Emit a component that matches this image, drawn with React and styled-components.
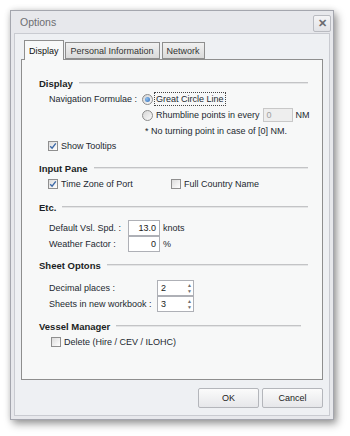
import React, { useState } from 'react';
import styled, { createGlobalStyle } from 'styled-components';

const GlobalStyle = createGlobalStyle`
  html, body {
    margin: 0;
    padding: 0;
    background: #ffffff;
  }
  body {
    font-family: 'Liberation Sans', Arial, sans-serif;
  }
`;

const Stage = styled.div`
  padding: 10px 0 0 10px;
  height: 436px;
  box-sizing: border-box;
`;

const Window = styled.div`
  width: 324px;
  height: 410px;
  box-sizing: border-box;
  display: flex;
  flex-direction: column;
  background: #e7e8ec;
  border: 1px solid #a4a6ae;
  box-shadow: 3px 4px 8px rgba(0, 0, 0, 0.38), 0 0 6px rgba(0, 0, 0, 0.12);
`;

const TitleBar = styled.div`
  height: 22px;
  display: flex;
  align-items: center;
  justify-content: space-between;
  padding: 0 2px 0 9px;
`;

const Title = styled.span`
  font-size: 10.5px;
  color: #6d6e72;
`;

const CloseButton = styled.button`
  width: 18px;
  height: 17px;
  margin-top: 3px;
  padding: 0;
  border: 1px solid #b9bbc1;
  border-radius: 2px;
  background: linear-gradient(#f4f4f6, #e2e3e7);
  color: #6a6b70;
  font: bold 11px 'Liberation Sans', Arial, sans-serif;
  line-height: 13px;
`;

const Client = styled.div`
  flex: 1;
  margin: 0 3px 3px;
  border: 1px solid #c9cbd1;
  background: #eef0f3;
  padding: 6px 6px 7px;
  display: flex;
  flex-direction: column;
`;

const TabBar = styled.div`
  height: 19px;
  display: flex;
  align-items: flex-end;
  padding-left: 3px;
  gap: 1px;
  position: relative;
  z-index: 1;
`;

const Tab = styled.div`
  height: ${p => (p.$active ? '20px' : '17px')};
  margin-bottom: ${p => (p.$active ? '-1px' : '0')};
  margin-left: ${p => p.$ml || 0}px;
  box-sizing: border-box;
  padding: 0 ${p => p.$pad}px;
  display: flex;
  align-items: center;
  font-size: 9px;
  color: ${p => (p.$active ? '#111' : '#333')};
  border: 1px solid #8e8e8e;
  border-bottom: ${p => (p.$active ? 'none' : '1px solid #8e8e8e')};
  background: ${p => (p.$active ? '#f8f9f9' : 'linear-gradient(#f1f1f1, #dadada)')};
`;

const Panel = styled.div`
  flex: 1;
  border: 1px solid #8e8e8e;
  background: #f7f8f8;
  padding: 15px 14px 0 17px;
  color: #232830;
  font-size: 9px;
`;

const Header = styled.div`
  height: 16px;
  margin-top: ${p => p.$mt || 0}px;
  margin-right: ${p => p.$mr || 0}px;
  display: flex;
  align-items: center;
  gap: 6px;
  font-size: 9.5px;
  font-weight: bold;
  color: #1c1f24;
`;

const Rule = styled.div`
  flex: 1;
  height: 1px;
  background: #c3c4c6;
  border-bottom: 1px solid #e4e5e6;
`;

const Row = styled.div`
  height: ${p => p.$h || 16}px;
  margin-top: ${p => p.$mt || 0}px;
  padding-left: ${p => p.$indent || 0}px;
  display: flex;
  align-items: center;
  white-space: nowrap;
`;

const Label = styled.span`
  width: ${p => p.$w}px;
  flex: none;
`;

const Item = styled.label`
  display: flex;
  align-items: center;
  gap: ${p => (p.$gap === undefined ? 3 : p.$gap)}px;
  width: ${p => (p.$w ? `${p.$w}px` : 'auto')};
`;

const Focus = styled.span`
  outline: 1px dotted #444;
  outline-offset: 0;
  padding: 0 1px;
  line-height: 12px;
`;

const Box = styled.span`
  width: 10px;
  height: 10px;
  box-sizing: border-box;
  flex: none;
  border: 1px solid #8f8f8f;
  background: linear-gradient(135deg, #dcdcdc, #ffffff);
  display: flex;
  align-items: center;
  justify-content: center;
`;

const Radio = styled.span`
  width: 11px;
  height: 11px;
  box-sizing: border-box;
  flex: none;
  border-radius: 50%;
  border: 1px solid #8c8c8c;
  background: linear-gradient(135deg, #d6d6d6, #fafafa);
  display: flex;
  align-items: center;
  justify-content: center;

  &::after {
    content: '';
    display: ${p => (p.$on ? 'block' : 'none')};
    width: 5px;
    height: 5px;
    border-radius: 50%;
    background: radial-gradient(circle at 35% 35%, #8fc0ef, #2d6bb8);
  }
`;

const Field = styled.span`
  width: ${p => p.$w}px;
  height: ${p => p.$h || 16}px;
  box-sizing: border-box;
  flex: none;
  border: 1px solid ${p => (p.$disabled ? '#c8c8c8' : '#aeb0b6')};
  background: ${p => (p.$disabled ? '#eeeeee' : '#ffffff')};
  color: ${p => (p.$disabled ? '#a0a0a0' : '#1a1a1a')};
  display: flex;
  align-items: center;
  justify-content: ${p => (p.$right ? 'flex-end' : 'flex-start')};
  padding: 0 3px;
  margin-right: 3px;
  margin-left: ${p => p.$ml || 0}px;
`;

const SpinField = styled(Field)`
  justify-content: space-between;
  padding-right: 1px;
`;

const Arrows = styled.span`
  display: flex;
  flex-direction: column;
  gap: 1px;
  color: #6f6f6f;
  font-size: 5px;
  line-height: 5px;
`;

const Note = styled.span`
  margin-left: 2px;
`;

const ButtonRow = styled.div`
  display: flex;
  justify-content: flex-end;
  gap: 3px;
  margin-top: 8px;
`;

const Button = styled.button`
  width: 61px;
  height: 20px;
  border: 1px solid #b4b6bb;
  border-radius: 2px;
  background: linear-gradient(#fbfbfb, #e6e7ea);
  font: 9px 'Liberation Sans', Arial, sans-serif;
  color: #222;
  padding: 0;
`;

const Check = ({ on }) => (
  <Box>
    {on && (
      <svg width="8" height="8" viewBox="0 0 8 8">
        <path d="M1.2 4.2 L3.1 6.2 L6.8 1.4" fill="none" stroke="#3d6aa8" strokeWidth="1.4" />
      </svg>
    )}
  </Box>
);

const Spin = ({ value }) => (
  <SpinField $w={37}>
    <span>{value}</span>
    <Arrows>
      <span>▲</span>
      <span>▼</span>
    </Arrows>
  </SpinField>
);

const App = () => {
  const [tab] = useState('display');

  return (
    <Stage>
      <GlobalStyle />
      <Window>
        <TitleBar>
          <Title>Options</Title>
          <CloseButton>✕</CloseButton>
        </TitleBar>
        <Client>
          <TabBar>
            <Tab $active={tab === 'display'} $pad={4}>Display</Tab>
            <Tab $pad={5}>Personal Information</Tab>
            <Tab $pad={4} $ml={1}>Network</Tab>
          </TabBar>
          <Panel>
            <Header>Display<Rule /></Header>
            <Row $indent={10}>
              <Label $w={93}>Navigation Formulae :</Label>
              <Item $gap={2}>
                <Radio $on />
                <Focus>Great Circle Line</Focus>
              </Item>
            </Row>
            <Row $indent={103}>
              <Item $gap={3}>
                <Radio />
                <span>Rhumbline points in every</span>
              </Item>
              <Field $w={30} $h={14} $disabled $ml={3}>0</Field>
              <span>NM</span>
            </Row>
            <Row $indent={104} $h={15}>
              <Note>* No turning point in case of [0] NM.</Note>
            </Row>
            <Row $indent={9}>
              <Item>
                <Check on />
                <span>Show Tooltips</span>
              </Item>
            </Row>

            <Header $mt={6}>Input Pane<Rule /></Header>
            <Row $indent={9}>
              <Item $w={123}>
                <Check on />
                <span>Time Zone of Port</span>
              </Item>
              <Item>
                <Check />
                <span>Full Country Name</span>
              </Item>
            </Row>

            <Header $mt={7}>Etc.<Rule /></Header>
            <Row $indent={10} $mt={5}>
              <Label $w={79}>Default Vsl. Spd. :</Label>
              <Field $w={32} $right>13.0</Field>
              <span>knots</span>
            </Row>
            <Row $indent={10}>
              <Label $w={79}>Weather Factor :</Label>
              <Field $w={32} $right>0</Field>
              <span>%</span>
            </Row>

            <Header $mt={5}>Sheet Optons<Rule /></Header>
            <Row $indent={10} $mt={7}>
              <Label $w={108}>Decimal places :</Label>
              <Spin value="2" />
            </Row>
            <Row $indent={10}>
              <Label $w={108}>Sheets in new workbook :</Label>
              <Spin value="3" />
            </Row>

            <Header $mt={6} $mr={7}>Vessel Manager<Rule /></Header>
            <Row $indent={12}>
              <Item>
                <Check />
                <span>Delete (Hire / CEV / ILOHC)</span>
              </Item>
            </Row>
          </Panel>
          <ButtonRow>
            <Button>OK</Button>
            <Button>Cancel</Button>
          </ButtonRow>
        </Client>
      </Window>
    </Stage>
  );
};

export default App;
